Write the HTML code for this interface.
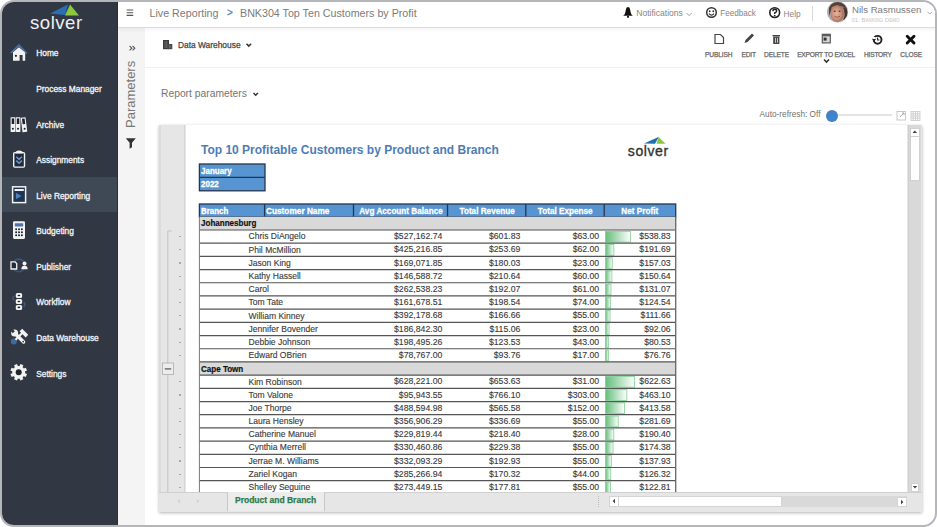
<!DOCTYPE html><html><head><meta charset="utf-8"><style>
*{margin:0;padding:0;box-sizing:border-box}
html,body{width:937px;height:527px;overflow:hidden;background:#fff;font-family:"Liberation Sans", sans-serif}
.t{position:absolute;white-space:nowrap}
.a{position:absolute}
</style></head><body>
<div class="a" style="left:0;top:0;width:937px;height:527px;border:2px solid #b4b6ba;border-radius:14px;overflow:hidden;background:#fff">
<div class="a" style="left:-2px;top:-2px;width:937px;height:527px">
<div class="a" style="left:0;top:0;width:118px;height:527px;background:#323843"></div>
<div class="a" style="left:0;top:177px;width:118px;height:34.8px;background:#3e4955"></div>
<svg class="a" style="left:0;top:0" width="118" height="40">
<polygon points="50,13.5 68,4.5 65,15" fill="#2a6fb5"/>
<polygon points="70,4.5 65,15.5 79,15.5" fill="#8dc63f"/>
</svg>
<div class="t" style="left:30px;top:13.76px;font-size:18.6px;line-height:18.6px;color:#f0f0f0;font-weight:400;letter-spacing:0.5px">solver</div>
<div class="t" style="left:36.2px;top:49.39px;font-size:8.4px;line-height:8.4px;color:#f4f4f4;font-weight:400;-webkit-text-stroke:0.3px #f4f4f4">Home</div>
<div class="t" style="left:36.2px;top:84.97px;font-size:8.4px;line-height:8.4px;color:#f4f4f4;font-weight:400;-webkit-text-stroke:0.3px #f4f4f4">Process Manager</div>
<div class="t" style="left:36.2px;top:120.55px;font-size:8.4px;line-height:8.4px;color:#f4f4f4;font-weight:400;-webkit-text-stroke:0.3px #f4f4f4">Archive</div>
<div class="t" style="left:36.2px;top:156.13px;font-size:8.4px;line-height:8.4px;color:#f4f4f4;font-weight:400;-webkit-text-stroke:0.3px #f4f4f4">Assignments</div>
<div class="t" style="left:36.2px;top:191.71px;font-size:8.4px;line-height:8.4px;color:#f4f4f4;font-weight:400;-webkit-text-stroke:0.3px #f4f4f4">Live Reporting</div>
<div class="t" style="left:36.2px;top:227.29px;font-size:8.4px;line-height:8.4px;color:#f4f4f4;font-weight:400;-webkit-text-stroke:0.3px #f4f4f4">Budgeting</div>
<div class="t" style="left:36.2px;top:262.87px;font-size:8.4px;line-height:8.4px;color:#f4f4f4;font-weight:400;-webkit-text-stroke:0.3px #f4f4f4">Publisher</div>
<div class="t" style="left:36.2px;top:298.45px;font-size:8.4px;line-height:8.4px;color:#f4f4f4;font-weight:400;-webkit-text-stroke:0.3px #f4f4f4">Workflow</div>
<div class="t" style="left:36.2px;top:334.03px;font-size:8.4px;line-height:8.4px;color:#f4f4f4;font-weight:400;-webkit-text-stroke:0.3px #f4f4f4">Data Warehouse</div>
<div class="t" style="left:36.2px;top:369.61px;font-size:8.4px;line-height:8.4px;color:#f4f4f4;font-weight:400;-webkit-text-stroke:0.3px #f4f4f4">Settings</div>
<div class="a" style="left:117px;top:0;width:1px;height:527px;background:#2b3038"></div>
<div class="a" style="left:118px;top:27.5px;width:27px;height:500px;background:#f4f4f4"></div>
<div class="a" style="left:118px;top:0;width:819px;height:27.5px;background:#fff;border-bottom:1.3px solid #dcdcdc;box-shadow:0 2px 4px rgba(0,0,0,0.05)"></div>
<svg class="a" style="left:0;top:0" width="118" height="400">
<path d="M10.8,53 L18.9,45.2 L27,53.5" stroke="#4a73a8" stroke-width="1.6" fill="none"/>
<path d="M13,52.2 L18.9,47.3 L25.2,52.5 L25.2,60.8 L22.6,60.8 L22.6,55 L19.6,55 L19.6,60.8 L13,60.8 Z" fill="#f2f2f2"/>
<circle cx="15.9" cy="55.8" r="1.1" fill="#222"/>
<g fill="#f2f2f2">
<rect x="10.6" y="117.2" width="4.7" height="14.7" rx="0.4"/>
<rect x="15.7" y="117.2" width="4.7" height="14.7" rx="0.4"/>
<rect x="21.6" y="117.4" width="4.8" height="14.7" rx="0.4" transform="rotate(-7 24 124.7)"/>
</g>
<g fill="#1a2230">
<rect x="11.7" y="118.4" width="2.5" height="5.6"/><rect x="16.8" y="118.4" width="2.5" height="5.6"/>
<rect x="22.7" y="118.6" width="2.6" height="5.6" transform="rotate(-7 24 124.7)"/>
<circle cx="12.9" cy="128.7" r="1"/><circle cx="18" cy="128.7" r="1"/><circle cx="24.6" cy="128.8" r="1"/>
</g>
<rect x="13.7" y="152.6" width="10.8" height="14.5" rx="1" fill="#1e2a3a" stroke="#f2f2f2" stroke-width="1.4"/>
<path d="M15.3,153.6 q0,-3.2 3.8,-3.2 q3.8,0 3.8,3.2 z" fill="#f2f2f2"/>
<path d="M16.3,156.8 l2.8,2.6 l2.8,-2.6 M16.3,160.6 l2.8,2.6 l2.8,-2.6" stroke="#7196c6" stroke-width="1.5" fill="none"/>
<rect x="12.6" y="186.8" width="13" height="15.8" fill="#1f344f" stroke="#f2f2f2" stroke-width="1.5"/>
<rect x="14.5" y="189" width="9.3" height="2" fill="#f2f2f2"/>
<polygon points="15.9,192.8 21.6,196 15.9,199.2" fill="#4d7fbf"/>
<rect x="13" y="221.3" width="12" height="17.6" rx="1.3" fill="#f2f2f2"/>
<rect x="14.8" y="223.2" width="8.4" height="3.2" rx="0.6" fill="#4f73aa"/>
<g fill="#1a2230">
<circle cx="16.1" cy="229.3" r="1"/><circle cx="19" cy="229.3" r="1"/><circle cx="21.9" cy="229.3" r="1"/>
<circle cx="16.1" cy="232.3" r="1"/><circle cx="19" cy="232.3" r="1"/><circle cx="21.9" cy="232.3" r="1"/>
<circle cx="16.1" cy="235.3" r="1"/><circle cx="19" cy="235.3" r="1"/><circle cx="21.9" cy="235.3" r="1"/>
</g>
<circle cx="18.8" cy="265.4" r="6.3" fill="none" stroke="#35557c" stroke-width="1.6"/>
<path d="M11,261.8 h4 l1.7,1.7 v5.5 h-5.7 z" fill="#222b36" stroke="#f2f2f2" stroke-width="1.3"/>
<circle cx="24.5" cy="263.6" r="2" fill="#f2f2f2"/>
<path d="M21.3,269.2 q0,-3.4 3.2,-3.4 q3.2,0 3.2,3.4 z" fill="#f2f2f2"/>
<g fill="#f2f2f2">
<rect x="15.8" y="293" width="6.3" height="5.1" rx="1.6"/>
<rect x="15.8" y="299" width="6.3" height="5.1" rx="1.6"/>
<rect x="15.8" y="304.9" width="6.3" height="5.1" rx="1.6"/>
</g>
<g fill="#1a2230">
<ellipse cx="18.9" cy="295.5" rx="1.4" ry="0.8"/><ellipse cx="18.9" cy="301.5" rx="1.4" ry="0.8"/><ellipse cx="18.9" cy="307.4" rx="1.4" ry="0.8"/>
</g>
<path d="M14.3,296 q-3.2,2 0,4.2" stroke="#3f5f85" stroke-width="1.3" fill="none"/>
<path d="M23.5,302.4 q3.2,2 0,4.2" stroke="#3f5f85" stroke-width="1.3" fill="none"/>
<circle cx="13.8" cy="341.4" r="3" fill="#3e6aa0"/>
<path d="M15.5,339.8 L22.5,332.8" stroke="#f2f2f2" stroke-width="2.2"/>
<rect x="19.6" y="331.3" width="8.6" height="3.6" fill="#f2f2f2" transform="rotate(45 23.9 333.1)"/>
<path d="M15.8,334.2 L23.6,342" stroke="#f2f2f2" stroke-width="3.4" stroke-linecap="round"/>
<circle cx="14.6" cy="333" r="3.5" fill="#f2f2f2"/>
<path d="M12.5,328.8 L14.8,331.2 L12.8,333.2 L10.4,330.8 z" fill="#323a44"/>
<circle cx="23.2" cy="341.6" r="0.85" fill="#1a2230"/>
<g transform="translate(18.7 372.3)">
<circle r="6.4" fill="#f2f2f2"/>
<g fill="#f2f2f2">
<rect x="-1.6" y="-8.3" width="3.2" height="16.6" transform="rotate(22.5)"/>
<rect x="-1.6" y="-8.3" width="3.2" height="16.6" transform="rotate(67.5)"/>
<rect x="-1.6" y="-8.3" width="3.2" height="16.6" transform="rotate(112.5)"/>
<rect x="-1.6" y="-8.3" width="3.2" height="16.6" transform="rotate(157.5)"/>
</g>
<circle r="3" fill="#1e2631"/>
</g>
</svg>
<svg class="a" style="left:120px;top:0" width="20" height="27"><path d="M6.6,10 h6.6 M6.6,12.7 h6.6 M6.6,15.4 h6.6" stroke="#555" stroke-width="1.15"/></svg><div class="t" style="left:149.5px;top:7.5px;font-size:10.7px;line-height:10.7px;color:#7b7b7b;font-weight:400;">Live Reporting</div>
<div class="t" style="left:227px;top:8px;font-size:10px;line-height:10px;color:#5b89b6;font-weight:400;-webkit-text-stroke:0.3px #5b89b6">&gt;</div>
<div class="t" style="left:240px;top:7.5px;font-size:10.7px;line-height:10.7px;color:#7b7b7b;font-weight:400;">BNK304 Top Ten Customers by Profit</div>
<svg class="a" style="left:600px;top:0" width="337" height="30">
<path d="M28,7 q-1.6,0 -2,2 q-0.5,3.5 -1.3,5.2 l-1.5,1.6 h9.6 l-1.5,-1.6 q-0.8,-1.7 -1.3,-5.2 q-0.4,-2 -2,-2 z" fill="#111"/>
<circle cx="28" cy="16.8" r="1.1" fill="#111"/>
<path d="M86.5,13 l2.6,2.6 l2.6,-2.6" stroke="#999" stroke-width="1" fill="none"/>
<circle cx="111.5" cy="12.5" r="4.8" fill="none" stroke="#333" stroke-width="1.5"/>
<circle cx="109.7" cy="11.2" r="0.95" fill="#333"/><circle cx="113.3" cy="11.2" r="0.95" fill="#333"/>
<path d="M108.9,13.6 q2.6,3 5.2,0" stroke="#333" stroke-width="1.2" fill="none"/>
<circle cx="174.7" cy="12.6" r="4.9" fill="none" stroke="#222" stroke-width="1.6"/>
<path d="M172.9,11.3 q0,-2 1.8,-2 q1.9,0 1.9,1.7 q0,1.2 -1.9,1.9 v1.1" stroke="#222" stroke-width="1.5" fill="none"/>
<circle cx="174.7" cy="15.6" r="0.9" fill="#222"/>
<rect x="212" y="6" width="1" height="15" fill="#d8d8d8"/>
<path d="M327.5,11.8 l2.3,2.3 l2.3,-2.3" stroke="#aaa" stroke-width="1" fill="none"/>
</svg>
<div class="t" style="left:636.3px;top:9.36px;font-size:8.55px;line-height:8.55px;color:#858585;font-weight:400;">Notifications</div>
<div class="t" style="left:720.2px;top:9.7px;font-size:8.15px;line-height:8.15px;color:#858585;font-weight:400;">Feedback</div>
<div class="t" style="left:783.6px;top:9.57px;font-size:8.3px;line-height:8.3px;color:#858585;font-weight:400;">Help</div>
<svg class="a" style="left:826px;top:0" width="24" height="26">
<defs><clipPath id="av"><circle cx="11.6" cy="12" r="10"/></clipPath>
<radialGradient id="sk" cx="0.45" cy="0.5" r="0.6"><stop offset="0" stop-color="#e2b4a0"/><stop offset="0.6" stop-color="#c98d76"/><stop offset="1" stop-color="#8a5a48"/></radialGradient></defs>
<circle cx="11.6" cy="12" r="10.6" fill="#b4b8be"/>
<g clip-path="url(#av)">
<rect x="0" y="0" width="24" height="26" fill="#a7acb3"/>
<path d="M3,8 q2,-7 9,-7 q7,0 9,7 v8 q-2,-5 -3,-9 q-6,-2 -12,0 q-1,4 -3,9 z" fill="#5a4034"/>
<ellipse cx="11.2" cy="13.5" rx="6.8" ry="8.6" fill="url(#sk)"/>
<path d="M16,6 q3,4 2.5,10 q-1,4 -3,6 l4,2 q3,-6 2,-13 z" fill="#4a3129"/>
<ellipse cx="8.7" cy="11.2" rx="1.1" ry="0.7" fill="#5a3a30"/>
<ellipse cx="13.6" cy="11.2" rx="1.1" ry="0.7" fill="#5a3a30"/>
<path d="M8.5,16.3 q2.8,2 5.5,0" stroke="#9a5a4a" stroke-width="0.9" fill="none"/>
</g>
</svg>
<div class="t" style="left:852px;top:4.5px;font-size:9.6px;line-height:9.6px;color:#7a7a7a;font-weight:400;">Nils Rasmussen</div>
<div class="t" style="left:851.5px;top:16.5px;font-size:6px;line-height:6px;color:#c4c4c4;font-weight:400;">01. B<span style="font-size:4.6px">ANKING</span> D<span style="font-size:4.6px">EMO</span></div>
<svg class="a" style="left:150px;top:30px" width="120" height="40">
<rect x="13" y="10" width="6" height="9.2" fill="#3a3a3a"/>
<rect x="17.5" y="14" width="4.8" height="5.2" fill="#4a4a4a"/>
<rect x="14.6" y="11" width="0.8" height="7" fill="#777"/><rect x="16.4" y="11" width="0.8" height="7" fill="#777"/>
<rect x="19.5" y="15" width="0.8" height="3" fill="#888"/>
<path d="M96.5,13.8 l2.3,2.3 l2.3,-2.3" stroke="#333" stroke-width="1.5" fill="none"/>
</svg>
<div class="t" style="left:178px;top:40.79px;font-size:8.4px;line-height:8.4px;color:#444;font-weight:400;-webkit-text-stroke:0.25px #444">Data Warehouse</div>
<svg class="a" style="left:690px;top:28px" width="247" height="40">
<path d="M25,6.5 h5.5 l3,3 v6 h-8.5 z" fill="none" stroke="#444" stroke-width="1.2"/>
<path d="M54.5,15 l1,-3 l6.5,-6.5 l2,2 l-6.5,6.5 z" fill="#444"/>
<rect x="82.5" y="7" width="7.5" height="1.3" fill="#444"/>
<rect x="83.2" y="8.5" width="6.2" height="7.5" fill="#444"/>
<rect x="85" y="9.8" width="0.7" height="5" fill="#fff"/><rect x="87" y="9.8" width="0.7" height="5" fill="#fff"/>
<rect x="131.7" y="5.7" width="9.2" height="9.8" fill="#5a5a5a"/>
<rect x="132.9" y="8.3" width="6.8" height="6" fill="#d6d6d6"/>
<rect x="133.6" y="9.6" width="3" height="3" fill="#333"/>
<path d="M134,31.5 l2.5,2.5 l2.5,-2.5" stroke="#333" stroke-width="1.6" fill="none"/>
<circle cx="187.6" cy="11.8" r="3.9" fill="none" stroke="#222" stroke-width="1.9"/>
<path d="M181.8,10.6 l2.2,2.8 l2.3,-2.6 z" fill="#222"/>
<rect x="182.5" y="9" width="3" height="2" fill="#fff"/>
<path d="M187.6,9.6 v2.4 h1.8" stroke="#222" stroke-width="1.1" fill="none"/>
<path d="M217.2,8.2 l6.8,6.8 M224,8.2 l-6.8,6.8" stroke="#111" stroke-width="2.9" stroke-linecap="round"/>
</svg>
<div class="t" style="left:705px;top:51.5px;font-size:6.6px;line-height:6.6px;color:#666;font-weight:400;letter-spacing:-0.1px;-webkit-text-stroke:0.25px #666">PUBLISH</div>
<div class="t" style="left:741.4px;top:51.5px;font-size:6.6px;line-height:6.6px;color:#666;font-weight:400;letter-spacing:-0.1px;-webkit-text-stroke:0.25px #666">EDIT</div>
<div class="t" style="left:764px;top:51.5px;font-size:6.6px;line-height:6.6px;color:#666;font-weight:400;letter-spacing:-0.1px;-webkit-text-stroke:0.25px #666">DELETE</div>
<div class="t" style="left:797.2px;top:51.5px;font-size:6.6px;line-height:6.6px;color:#666;font-weight:400;letter-spacing:-0.22px;-webkit-text-stroke:0.25px #666">EXPORT TO EXCEL</div>
<div class="t" style="left:864px;top:51.5px;font-size:6.6px;line-height:6.6px;color:#666;font-weight:400;letter-spacing:-0.2px;-webkit-text-stroke:0.25px #666">HISTORY</div>
<div class="t" style="left:900.3px;top:51.5px;font-size:6.6px;line-height:6.6px;color:#666;font-weight:400;letter-spacing:-0.1px;-webkit-text-stroke:0.25px #666">CLOSE</div>
<div class="a" style="left:145px;top:67px;width:792px;height:1px;background:#f0f0f0"></div>
<svg class="a" style="left:125px;top:42px" width="14" height="12"><path d="M4.6,4 l2.2,2.2 l-2.2,2.2 M7.6,4 l2.2,2.2 l-2.2,2.2" stroke="#555" stroke-width="1.1" fill="none"/></svg><div class="t" style="left:124px;top:128px;font-size:13px;line-height:13px;color:#777;transform-origin:0 0;transform:rotate(-90deg);">Parameters</div>
<svg class="a" style="left:118px;top:130px" width="27" height="25">
<path d="M7.8,8.2 h10 l-3.8,4.5 v4.5 l-2.4,1.5 v-6 z" fill="#333"/>
</svg>
<div class="t" style="left:161px;top:88.8px;font-size:10.3px;line-height:10.3px;color:#757575;font-weight:400;">Report parameters</div>
<svg class="a" style="left:250px;top:89px" width="12" height="10"><path d="M3.5,4 l2.2,2.2 l2.2,-2.2" stroke="#333" stroke-width="1.5" fill="none"/></svg>
<div class="t" style="left:759.6px;top:111.2px;font-size:8.25px;line-height:8.25px;color:#707070;font-weight:400;">Auto-refresh: Off</div>
<div class="a" style="left:838px;top:114.3px;width:54px;height:2px;background:#e4e4e4"></div>
<div class="a" style="left:826px;top:109.8px;width:12.2px;height:12.2px;border-radius:50%;background:#3f83c8"></div>
<svg class="a" style="left:890px;top:105px" width="40" height="20">
<rect x="7" y="6.5" width="8.5" height="8.5" fill="none" stroke="#c8c8c8" stroke-width="1"/>
<path d="M10,12 l4,-4 M12,8 h2 v2" stroke="#aaa" stroke-width="1" fill="none"/>
<g stroke="#c8c8c8" stroke-width="0.8" fill="none">
<rect x="21" y="6.5" width="9" height="9"/>
<path d="M21,8.8 h9 M21,11 h9 M21,13.2 h9 M23.2,6.5 v9 M25.5,6.5 v9 M27.7,6.5 v9"/>
</g>
</svg>
<div class="a" style="left:159px;top:125px;width:763px;height:387px;background:#e6e6e6;box-shadow:0 1px 3px rgba(0,0,0,0.3)"></div>
<div class="a" style="left:185.5px;top:125px;width:721.5px;height:367px;background:#fff"></div>
<div class="a" style="left:183.5px;top:125px;width:1px;height:367px;background:#d6d6d6"></div>
<div class="a" style="left:159px;top:125px;width:2px;height:367px;background:#dcdcdc"></div>
<div class="a" style="left:908px;top:125px;width:13px;height:367px;background:#d9d9d9;border-left:1px solid #cfcfcf"></div>
<div class="a" style="left:910px;top:127.5px;width:9.5px;height:53px;background:#fff;border:1px solid #d0d0d0"></div>
<div class="a" style="left:910px;top:127.5px;width:9.5px;height:9px;background:#fff;border:1px solid #d0d0d0"></div>
<svg class="a" style="left:910px;top:127px" width="10" height="10"><path d="M2.5,6 l2.3,-2.5 l2.3,2.5 z" fill="#444"/></svg>
<div class="a" style="left:911px;top:482.5px;width:8px;height:9px;background:#fff;border:1px solid #d0d0d0"></div>
<svg class="a" style="left:910px;top:482px" width="10" height="10"><path d="M2.8,4 l2.2,2.4 l2.2,-2.4 z" fill="#444"/></svg>
<div class="a" style="left:159px;top:492px;width:763px;height:19px;background:#e6e6e6;border-top:1px solid #d0d0d0"></div>
<div class="a" style="left:226.5px;top:492px;width:98px;height:19px;background:#ececec;border-left:1px solid #c8c8c8;border-right:1px solid #c8c8c8"></div>
<div class="t" style="left:234.7px;top:495.88px;font-size:9px;line-height:9px;color:#2d7a4b;font-weight:700;transform:scaleX(0.945);transform-origin:0 0;-webkit-text-stroke:0.25px #2d7a4b">Product and Branch</div>
<div class="t" style="left:177.5px;top:496.5px;font-size:9px;line-height:9px;color:#c0c0c0;font-weight:400;">&#8249;</div>
<div class="t" style="left:196px;top:496.5px;font-size:9px;line-height:9px;color:#c0c0c0;font-weight:400;">&#8250;</div>
<div class="a" style="left:598px;top:495.5px;width:2px;height:11px;border-left:1px dotted #bbb"></div>
<div class="a" style="left:609px;top:495.5px;width:298px;height:11.5px;background:#d9d9d9"></div>
<div class="a" style="left:609px;top:495.5px;width:173px;height:11.5px;background:#fff;border:1px solid #d4d4d4"></div>
<div class="a" style="left:609px;top:495.5px;width:10px;height:11.5px;background:#fff;border:1px solid #d4d4d4"></div>
<svg class="a" style="left:609px;top:495px" width="10" height="12"><path d="M6,3.8 l-2.4,2.3 l2.4,2.3 z" fill="#444"/></svg>
<div class="a" style="left:897px;top:496.5px;width:9.5px;height:10px;background:#fff;border:1px solid #d4d4d4"></div>
<svg class="a" style="left:897px;top:496px" width="10" height="12"><path d="M4,3.8 l2.4,2.3 l-2.4,2.3 z" fill="#444"/></svg>
<div class="t" style="left:201px;top:143.64px;font-size:12px;line-height:12px;color:#4d7db5;font-weight:700;">Top 10 Profitable Customers by Product and Branch</div>
<svg class="a" style="left:620px;top:130px" width="60" height="32">
<polygon points="24,13.4 39,6.7 35,13.8" fill="#1f6fb0"/>
<polygon points="38.6,7 45.5,13.8 36.5,13.8" fill="#8cc63f"/>
</svg>
<div class="t" style="left:627.8px;top:143.65px;font-size:14px;line-height:14px;color:#333;font-weight:400;letter-spacing:0.6px;-webkit-text-stroke:0.35px #333">solver</div>
<svg class="a" style="left:0;top:0" width="907" height="492"><rect x="199.4" y="164" width="65.6" height="26.8" fill="#5695d1" stroke="#26364e" stroke-width="1.3"/><line x1="199.4" y1="177.3" x2="265" y2="177.3" stroke="#26364e" stroke-width="1.3"/><rect x="199.4" y="204" width="476.30000000000007" height="13" fill="#5695d1" stroke="#26364e" stroke-width="1.3"/><line x1="264.6" y1="204" x2="264.6" y2="217" stroke="#26364e" stroke-width="1.3"/><line x1="353.5" y1="204" x2="353.5" y2="217" stroke="#26364e" stroke-width="1.3"/><line x1="447.5" y1="204" x2="447.5" y2="217" stroke="#26364e" stroke-width="1.3"/><line x1="525.8" y1="204" x2="525.8" y2="217" stroke="#26364e" stroke-width="1.3"/><line x1="604.2" y1="204" x2="604.2" y2="217" stroke="#26364e" stroke-width="1.3"/><defs><linearGradient id="g" x1="0" x2="1" y1="0" y2="0"><stop offset="0" stop-color="#63be7b"/><stop offset="1" stop-color="#ffffff"/></linearGradient></defs><rect x="199.4" y="216.80" width="476.30000000000007" height="13.195" fill="#d9d9d9"/><rect x="605.5" y="231.30" width="24.96" height="10.79" fill="url(#g)" stroke="#7fcf95" stroke-width="0.8"/><rect x="605.5" y="244.49" width="8.36" height="10.79" fill="url(#g)" stroke="#7fcf95" stroke-width="0.8"/><rect x="605.5" y="257.69" width="6.71" height="10.79" fill="url(#g)" stroke="#7fcf95" stroke-width="0.8"/><rect x="605.5" y="270.88" width="6.40" height="10.79" fill="url(#g)" stroke="#7fcf95" stroke-width="0.8"/><rect x="605.5" y="284.07" width="5.47" height="10.79" fill="url(#g)" stroke="#7fcf95" stroke-width="0.8"/><rect x="605.5" y="297.27" width="5.15" height="10.79" fill="url(#g)" stroke="#7fcf95" stroke-width="0.8"/><rect x="605.5" y="310.46" width="4.54" height="10.79" fill="url(#g)" stroke="#7fcf95" stroke-width="0.8"/><rect x="605.5" y="323.66" width="3.60" height="10.79" fill="url(#g)" stroke="#7fcf95" stroke-width="0.8"/><rect x="605.5" y="336.85" width="3.05" height="10.79" fill="url(#g)" stroke="#7fcf95" stroke-width="0.8"/><rect x="605.5" y="350.05" width="2.87" height="10.79" fill="url(#g)" stroke="#7fcf95" stroke-width="0.8"/><rect x="199.4" y="361.94" width="476.30000000000007" height="13.195" fill="#d9d9d9"/><rect x="605.5" y="376.44" width="28.96" height="10.79" fill="url(#g)" stroke="#7fcf95" stroke-width="0.8"/><rect x="605.5" y="389.63" width="21.34" height="10.79" fill="url(#g)" stroke="#7fcf95" stroke-width="0.8"/><rect x="605.5" y="402.83" width="18.97" height="10.79" fill="url(#g)" stroke="#7fcf95" stroke-width="0.8"/><rect x="605.5" y="416.02" width="12.66" height="10.79" fill="url(#g)" stroke="#7fcf95" stroke-width="0.8"/><rect x="605.5" y="429.22" width="8.30" height="10.79" fill="url(#g)" stroke="#7fcf95" stroke-width="0.8"/><rect x="605.5" y="442.41" width="7.54" height="10.79" fill="url(#g)" stroke="#7fcf95" stroke-width="0.8"/><rect x="605.5" y="455.61" width="5.79" height="10.79" fill="url(#g)" stroke="#7fcf95" stroke-width="0.8"/><rect x="605.5" y="468.80" width="5.24" height="10.79" fill="url(#g)" stroke="#7fcf95" stroke-width="0.8"/><rect x="605.5" y="482.00" width="5.07" height="10.79" fill="url(#g)" stroke="#7fcf95" stroke-width="0.8"/><line x1="199.4" y1="230.00" x2="675.7" y2="230.00" stroke="#555" stroke-width="1.2"/><line x1="199.4" y1="243.19" x2="675.7" y2="243.19" stroke="#555" stroke-width="1.2"/><line x1="199.4" y1="256.38" x2="675.7" y2="256.38" stroke="#555" stroke-width="1.2"/><line x1="199.4" y1="269.58" x2="675.7" y2="269.58" stroke="#555" stroke-width="1.2"/><line x1="199.4" y1="282.77" x2="675.7" y2="282.77" stroke="#555" stroke-width="1.2"/><line x1="199.4" y1="295.97" x2="675.7" y2="295.97" stroke="#555" stroke-width="1.2"/><line x1="199.4" y1="309.16" x2="675.7" y2="309.16" stroke="#555" stroke-width="1.2"/><line x1="199.4" y1="322.36" x2="675.7" y2="322.36" stroke="#555" stroke-width="1.2"/><line x1="199.4" y1="335.55" x2="675.7" y2="335.55" stroke="#555" stroke-width="1.2"/><line x1="199.4" y1="348.75" x2="675.7" y2="348.75" stroke="#555" stroke-width="1.2"/><line x1="199.4" y1="361.94" x2="675.7" y2="361.94" stroke="#555" stroke-width="1.2"/><line x1="199.4" y1="375.14" x2="675.7" y2="375.14" stroke="#555" stroke-width="1.2"/><line x1="199.4" y1="388.33" x2="675.7" y2="388.33" stroke="#555" stroke-width="1.2"/><line x1="199.4" y1="401.53" x2="675.7" y2="401.53" stroke="#555" stroke-width="1.2"/><line x1="199.4" y1="414.72" x2="675.7" y2="414.72" stroke="#555" stroke-width="1.2"/><line x1="199.4" y1="427.92" x2="675.7" y2="427.92" stroke="#555" stroke-width="1.2"/><line x1="199.4" y1="441.11" x2="675.7" y2="441.11" stroke="#555" stroke-width="1.2"/><line x1="199.4" y1="454.31" x2="675.7" y2="454.31" stroke="#555" stroke-width="1.2"/><line x1="199.4" y1="467.50" x2="675.7" y2="467.50" stroke="#555" stroke-width="1.2"/><line x1="199.4" y1="480.70" x2="675.7" y2="480.70" stroke="#555" stroke-width="1.2"/><line x1="199.4" y1="493.89" x2="675.7" y2="493.89" stroke="#555" stroke-width="1.2"/><line x1="199.4" y1="217" x2="199.4" y2="492" stroke="#777" stroke-width="1"/><line x1="675.7" y1="217" x2="675.7" y2="492" stroke="#666" stroke-width="1.3"/></svg>
<div class="a" style="left:0;top:0;width:907px;height:492px;overflow:hidden">
<div class="t" style="left:200.8px;top:219.41px;font-size:9.2px;line-height:9.2px;color:#111;font-weight:700;transform:scaleX(0.875);transform-origin:0 0;-webkit-text-stroke:0.2px #111">Johannesburg</div>
<div class="t" style="left:248.5px;top:232.36px;font-size:8.55px;line-height:8.55px;color:#3a3a3a;font-weight:400;-webkit-text-stroke:0.12px #3a3a3a">Chris DiAngelo</div>
<div class="t" style="right:464.70px;top:232.23px;font-size:8.7px;line-height:8.7px;color:#3a3a3a;-webkit-text-stroke:0.12px #3a3a3a">$527,162.74</div>
<div class="t" style="right:386.70px;top:232.23px;font-size:8.7px;line-height:8.7px;color:#3a3a3a;-webkit-text-stroke:0.12px #3a3a3a">$601.83</div>
<div class="t" style="right:307.80px;top:232.23px;font-size:8.7px;line-height:8.7px;color:#3a3a3a;-webkit-text-stroke:0.12px #3a3a3a">$63.00</div>
<div class="t" style="right:236.30px;top:232.23px;font-size:8.7px;line-height:8.7px;color:#3a3a3a;-webkit-text-stroke:0.12px #3a3a3a">$538.83</div>
<div class="t" style="left:248.5px;top:245.55px;font-size:8.55px;line-height:8.55px;color:#3a3a3a;font-weight:400;-webkit-text-stroke:0.12px #3a3a3a">Phil McMillion</div>
<div class="t" style="right:464.70px;top:245.43px;font-size:8.7px;line-height:8.7px;color:#3a3a3a;-webkit-text-stroke:0.12px #3a3a3a">$425,216.85</div>
<div class="t" style="right:386.70px;top:245.43px;font-size:8.7px;line-height:8.7px;color:#3a3a3a;-webkit-text-stroke:0.12px #3a3a3a">$253.69</div>
<div class="t" style="right:307.80px;top:245.43px;font-size:8.7px;line-height:8.7px;color:#3a3a3a;-webkit-text-stroke:0.12px #3a3a3a">$62.00</div>
<div class="t" style="right:236.30px;top:245.43px;font-size:8.7px;line-height:8.7px;color:#3a3a3a;-webkit-text-stroke:0.12px #3a3a3a">$191.69</div>
<div class="t" style="left:248.5px;top:258.75px;font-size:8.55px;line-height:8.55px;color:#3a3a3a;font-weight:400;-webkit-text-stroke:0.12px #3a3a3a">Jason King</div>
<div class="t" style="right:464.70px;top:258.62px;font-size:8.7px;line-height:8.7px;color:#3a3a3a;-webkit-text-stroke:0.12px #3a3a3a">$169,071.85</div>
<div class="t" style="right:386.70px;top:258.62px;font-size:8.7px;line-height:8.7px;color:#3a3a3a;-webkit-text-stroke:0.12px #3a3a3a">$180.03</div>
<div class="t" style="right:307.80px;top:258.62px;font-size:8.7px;line-height:8.7px;color:#3a3a3a;-webkit-text-stroke:0.12px #3a3a3a">$23.00</div>
<div class="t" style="right:236.30px;top:258.62px;font-size:8.7px;line-height:8.7px;color:#3a3a3a;-webkit-text-stroke:0.12px #3a3a3a">$157.03</div>
<div class="t" style="left:248.5px;top:271.94px;font-size:8.55px;line-height:8.55px;color:#3a3a3a;font-weight:400;-webkit-text-stroke:0.12px #3a3a3a">Kathy Hassell</div>
<div class="t" style="right:464.70px;top:271.82px;font-size:8.7px;line-height:8.7px;color:#3a3a3a;-webkit-text-stroke:0.12px #3a3a3a">$146,588.72</div>
<div class="t" style="right:386.70px;top:271.82px;font-size:8.7px;line-height:8.7px;color:#3a3a3a;-webkit-text-stroke:0.12px #3a3a3a">$210.64</div>
<div class="t" style="right:307.80px;top:271.82px;font-size:8.7px;line-height:8.7px;color:#3a3a3a;-webkit-text-stroke:0.12px #3a3a3a">$60.00</div>
<div class="t" style="right:236.30px;top:271.82px;font-size:8.7px;line-height:8.7px;color:#3a3a3a;-webkit-text-stroke:0.12px #3a3a3a">$150.64</div>
<div class="t" style="left:248.5px;top:285.14px;font-size:8.55px;line-height:8.55px;color:#3a3a3a;font-weight:400;-webkit-text-stroke:0.12px #3a3a3a">Carol</div>
<div class="t" style="right:464.70px;top:285.01px;font-size:8.7px;line-height:8.7px;color:#3a3a3a;-webkit-text-stroke:0.12px #3a3a3a">$262,538.23</div>
<div class="t" style="right:386.70px;top:285.01px;font-size:8.7px;line-height:8.7px;color:#3a3a3a;-webkit-text-stroke:0.12px #3a3a3a">$192.07</div>
<div class="t" style="right:307.80px;top:285.01px;font-size:8.7px;line-height:8.7px;color:#3a3a3a;-webkit-text-stroke:0.12px #3a3a3a">$61.00</div>
<div class="t" style="right:236.30px;top:285.01px;font-size:8.7px;line-height:8.7px;color:#3a3a3a;-webkit-text-stroke:0.12px #3a3a3a">$131.07</div>
<div class="t" style="left:248.5px;top:298.33px;font-size:8.55px;line-height:8.55px;color:#3a3a3a;font-weight:400;-webkit-text-stroke:0.12px #3a3a3a">Tom Tate</div>
<div class="t" style="right:464.70px;top:298.21px;font-size:8.7px;line-height:8.7px;color:#3a3a3a;-webkit-text-stroke:0.12px #3a3a3a">$161,678.51</div>
<div class="t" style="right:386.70px;top:298.21px;font-size:8.7px;line-height:8.7px;color:#3a3a3a;-webkit-text-stroke:0.12px #3a3a3a">$198.54</div>
<div class="t" style="right:307.80px;top:298.21px;font-size:8.7px;line-height:8.7px;color:#3a3a3a;-webkit-text-stroke:0.12px #3a3a3a">$74.00</div>
<div class="t" style="right:236.30px;top:298.21px;font-size:8.7px;line-height:8.7px;color:#3a3a3a;-webkit-text-stroke:0.12px #3a3a3a">$124.54</div>
<div class="t" style="left:248.5px;top:311.53px;font-size:8.55px;line-height:8.55px;color:#3a3a3a;font-weight:400;-webkit-text-stroke:0.12px #3a3a3a">William Kinney</div>
<div class="t" style="right:464.70px;top:311.40px;font-size:8.7px;line-height:8.7px;color:#3a3a3a;-webkit-text-stroke:0.12px #3a3a3a">$392,178.68</div>
<div class="t" style="right:386.70px;top:311.40px;font-size:8.7px;line-height:8.7px;color:#3a3a3a;-webkit-text-stroke:0.12px #3a3a3a">$166.66</div>
<div class="t" style="right:307.80px;top:311.40px;font-size:8.7px;line-height:8.7px;color:#3a3a3a;-webkit-text-stroke:0.12px #3a3a3a">$55.00</div>
<div class="t" style="right:236.30px;top:311.40px;font-size:8.7px;line-height:8.7px;color:#3a3a3a;-webkit-text-stroke:0.12px #3a3a3a">$111.66</div>
<div class="t" style="left:248.5px;top:324.72px;font-size:8.55px;line-height:8.55px;color:#3a3a3a;font-weight:400;-webkit-text-stroke:0.12px #3a3a3a">Jennifer Bovender</div>
<div class="t" style="right:464.70px;top:324.60px;font-size:8.7px;line-height:8.7px;color:#3a3a3a;-webkit-text-stroke:0.12px #3a3a3a">$186,842.30</div>
<div class="t" style="right:386.70px;top:324.60px;font-size:8.7px;line-height:8.7px;color:#3a3a3a;-webkit-text-stroke:0.12px #3a3a3a">$115.06</div>
<div class="t" style="right:307.80px;top:324.60px;font-size:8.7px;line-height:8.7px;color:#3a3a3a;-webkit-text-stroke:0.12px #3a3a3a">$23.00</div>
<div class="t" style="right:236.30px;top:324.60px;font-size:8.7px;line-height:8.7px;color:#3a3a3a;-webkit-text-stroke:0.12px #3a3a3a">$92.06</div>
<div class="t" style="left:248.5px;top:337.92px;font-size:8.55px;line-height:8.55px;color:#3a3a3a;font-weight:400;-webkit-text-stroke:0.12px #3a3a3a">Debbie Johnson</div>
<div class="t" style="right:464.70px;top:337.79px;font-size:8.7px;line-height:8.7px;color:#3a3a3a;-webkit-text-stroke:0.12px #3a3a3a">$198,495.26</div>
<div class="t" style="right:386.70px;top:337.79px;font-size:8.7px;line-height:8.7px;color:#3a3a3a;-webkit-text-stroke:0.12px #3a3a3a">$123.53</div>
<div class="t" style="right:307.80px;top:337.79px;font-size:8.7px;line-height:8.7px;color:#3a3a3a;-webkit-text-stroke:0.12px #3a3a3a">$43.00</div>
<div class="t" style="right:236.30px;top:337.79px;font-size:8.7px;line-height:8.7px;color:#3a3a3a;-webkit-text-stroke:0.12px #3a3a3a">$80.53</div>
<div class="t" style="left:248.5px;top:351.11px;font-size:8.55px;line-height:8.55px;color:#3a3a3a;font-weight:400;-webkit-text-stroke:0.12px #3a3a3a">Edward OBrien</div>
<div class="t" style="right:464.70px;top:350.99px;font-size:8.7px;line-height:8.7px;color:#3a3a3a;-webkit-text-stroke:0.12px #3a3a3a">$78,767.00</div>
<div class="t" style="right:386.70px;top:350.99px;font-size:8.7px;line-height:8.7px;color:#3a3a3a;-webkit-text-stroke:0.12px #3a3a3a">$93.76</div>
<div class="t" style="right:307.80px;top:350.99px;font-size:8.7px;line-height:8.7px;color:#3a3a3a;-webkit-text-stroke:0.12px #3a3a3a">$17.00</div>
<div class="t" style="right:236.30px;top:350.99px;font-size:8.7px;line-height:8.7px;color:#3a3a3a;-webkit-text-stroke:0.12px #3a3a3a">$76.76</div>
<div class="t" style="left:200.8px;top:364.56px;font-size:9.2px;line-height:9.2px;color:#111;font-weight:700;transform:scaleX(0.875);transform-origin:0 0;-webkit-text-stroke:0.2px #111">Cape Town</div>
<div class="t" style="left:248.5px;top:377.5px;font-size:8.55px;line-height:8.55px;color:#3a3a3a;font-weight:400;-webkit-text-stroke:0.12px #3a3a3a">Kim Robinson</div>
<div class="t" style="right:464.70px;top:377.38px;font-size:8.7px;line-height:8.7px;color:#3a3a3a;-webkit-text-stroke:0.12px #3a3a3a">$628,221.00</div>
<div class="t" style="right:386.70px;top:377.38px;font-size:8.7px;line-height:8.7px;color:#3a3a3a;-webkit-text-stroke:0.12px #3a3a3a">$653.63</div>
<div class="t" style="right:307.80px;top:377.38px;font-size:8.7px;line-height:8.7px;color:#3a3a3a;-webkit-text-stroke:0.12px #3a3a3a">$31.00</div>
<div class="t" style="right:236.30px;top:377.38px;font-size:8.7px;line-height:8.7px;color:#3a3a3a;-webkit-text-stroke:0.12px #3a3a3a">$622.63</div>
<div class="t" style="left:248.5px;top:390.7px;font-size:8.55px;line-height:8.55px;color:#3a3a3a;font-weight:400;-webkit-text-stroke:0.12px #3a3a3a">Tom Valone</div>
<div class="t" style="right:464.70px;top:390.57px;font-size:8.7px;line-height:8.7px;color:#3a3a3a;-webkit-text-stroke:0.12px #3a3a3a">$95,943.55</div>
<div class="t" style="right:386.70px;top:390.57px;font-size:8.7px;line-height:8.7px;color:#3a3a3a;-webkit-text-stroke:0.12px #3a3a3a">$766.10</div>
<div class="t" style="right:307.80px;top:390.57px;font-size:8.7px;line-height:8.7px;color:#3a3a3a;-webkit-text-stroke:0.12px #3a3a3a">$303.00</div>
<div class="t" style="right:236.30px;top:390.57px;font-size:8.7px;line-height:8.7px;color:#3a3a3a;-webkit-text-stroke:0.12px #3a3a3a">$463.10</div>
<div class="t" style="left:248.5px;top:403.89px;font-size:8.55px;line-height:8.55px;color:#3a3a3a;font-weight:400;-webkit-text-stroke:0.12px #3a3a3a">Joe Thorpe</div>
<div class="t" style="right:464.70px;top:403.77px;font-size:8.7px;line-height:8.7px;color:#3a3a3a;-webkit-text-stroke:0.12px #3a3a3a">$488,594.98</div>
<div class="t" style="right:386.70px;top:403.77px;font-size:8.7px;line-height:8.7px;color:#3a3a3a;-webkit-text-stroke:0.12px #3a3a3a">$565.58</div>
<div class="t" style="right:307.80px;top:403.77px;font-size:8.7px;line-height:8.7px;color:#3a3a3a;-webkit-text-stroke:0.12px #3a3a3a">$152.00</div>
<div class="t" style="right:236.30px;top:403.77px;font-size:8.7px;line-height:8.7px;color:#3a3a3a;-webkit-text-stroke:0.12px #3a3a3a">$413.58</div>
<div class="t" style="left:248.5px;top:417.09px;font-size:8.55px;line-height:8.55px;color:#3a3a3a;font-weight:400;-webkit-text-stroke:0.12px #3a3a3a">Laura Hensley</div>
<div class="t" style="right:464.70px;top:416.96px;font-size:8.7px;line-height:8.7px;color:#3a3a3a;-webkit-text-stroke:0.12px #3a3a3a">$356,906.29</div>
<div class="t" style="right:386.70px;top:416.96px;font-size:8.7px;line-height:8.7px;color:#3a3a3a;-webkit-text-stroke:0.12px #3a3a3a">$336.69</div>
<div class="t" style="right:307.80px;top:416.96px;font-size:8.7px;line-height:8.7px;color:#3a3a3a;-webkit-text-stroke:0.12px #3a3a3a">$55.00</div>
<div class="t" style="right:236.30px;top:416.96px;font-size:8.7px;line-height:8.7px;color:#3a3a3a;-webkit-text-stroke:0.12px #3a3a3a">$281.69</div>
<div class="t" style="left:248.5px;top:430.28px;font-size:8.55px;line-height:8.55px;color:#3a3a3a;font-weight:400;-webkit-text-stroke:0.12px #3a3a3a">Catherine Manuel</div>
<div class="t" style="right:464.70px;top:430.16px;font-size:8.7px;line-height:8.7px;color:#3a3a3a;-webkit-text-stroke:0.12px #3a3a3a">$229,819.44</div>
<div class="t" style="right:386.70px;top:430.16px;font-size:8.7px;line-height:8.7px;color:#3a3a3a;-webkit-text-stroke:0.12px #3a3a3a">$218.40</div>
<div class="t" style="right:307.80px;top:430.16px;font-size:8.7px;line-height:8.7px;color:#3a3a3a;-webkit-text-stroke:0.12px #3a3a3a">$28.00</div>
<div class="t" style="right:236.30px;top:430.16px;font-size:8.7px;line-height:8.7px;color:#3a3a3a;-webkit-text-stroke:0.12px #3a3a3a">$190.40</div>
<div class="t" style="left:248.5px;top:443.48px;font-size:8.55px;line-height:8.55px;color:#3a3a3a;font-weight:400;-webkit-text-stroke:0.12px #3a3a3a">Cynthia Merrell</div>
<div class="t" style="right:464.70px;top:443.35px;font-size:8.7px;line-height:8.7px;color:#3a3a3a;-webkit-text-stroke:0.12px #3a3a3a">$330,460.86</div>
<div class="t" style="right:386.70px;top:443.35px;font-size:8.7px;line-height:8.7px;color:#3a3a3a;-webkit-text-stroke:0.12px #3a3a3a">$229.38</div>
<div class="t" style="right:307.80px;top:443.35px;font-size:8.7px;line-height:8.7px;color:#3a3a3a;-webkit-text-stroke:0.12px #3a3a3a">$55.00</div>
<div class="t" style="right:236.30px;top:443.35px;font-size:8.7px;line-height:8.7px;color:#3a3a3a;-webkit-text-stroke:0.12px #3a3a3a">$174.38</div>
<div class="t" style="left:248.5px;top:456.67px;font-size:8.55px;line-height:8.55px;color:#3a3a3a;font-weight:400;-webkit-text-stroke:0.12px #3a3a3a">Jerrae M. Williams</div>
<div class="t" style="right:464.70px;top:456.55px;font-size:8.7px;line-height:8.7px;color:#3a3a3a;-webkit-text-stroke:0.12px #3a3a3a">$332,093.29</div>
<div class="t" style="right:386.70px;top:456.55px;font-size:8.7px;line-height:8.7px;color:#3a3a3a;-webkit-text-stroke:0.12px #3a3a3a">$192.93</div>
<div class="t" style="right:307.80px;top:456.55px;font-size:8.7px;line-height:8.7px;color:#3a3a3a;-webkit-text-stroke:0.12px #3a3a3a">$55.00</div>
<div class="t" style="right:236.30px;top:456.55px;font-size:8.7px;line-height:8.7px;color:#3a3a3a;-webkit-text-stroke:0.12px #3a3a3a">$137.93</div>
<div class="t" style="left:248.5px;top:469.87px;font-size:8.55px;line-height:8.55px;color:#3a3a3a;font-weight:400;-webkit-text-stroke:0.12px #3a3a3a">Zariel Kogan</div>
<div class="t" style="right:464.70px;top:469.74px;font-size:8.7px;line-height:8.7px;color:#3a3a3a;-webkit-text-stroke:0.12px #3a3a3a">$285,266.94</div>
<div class="t" style="right:386.70px;top:469.74px;font-size:8.7px;line-height:8.7px;color:#3a3a3a;-webkit-text-stroke:0.12px #3a3a3a">$170.32</div>
<div class="t" style="right:307.80px;top:469.74px;font-size:8.7px;line-height:8.7px;color:#3a3a3a;-webkit-text-stroke:0.12px #3a3a3a">$44.00</div>
<div class="t" style="right:236.30px;top:469.74px;font-size:8.7px;line-height:8.7px;color:#3a3a3a;-webkit-text-stroke:0.12px #3a3a3a">$126.32</div>
<div class="t" style="left:248.5px;top:483.06px;font-size:8.55px;line-height:8.55px;color:#3a3a3a;font-weight:400;-webkit-text-stroke:0.12px #3a3a3a">Shelley Seguine</div>
<div class="t" style="right:464.70px;top:482.94px;font-size:8.7px;line-height:8.7px;color:#3a3a3a;-webkit-text-stroke:0.12px #3a3a3a">$273,449.15</div>
<div class="t" style="right:386.70px;top:482.94px;font-size:8.7px;line-height:8.7px;color:#3a3a3a;-webkit-text-stroke:0.12px #3a3a3a">$177.81</div>
<div class="t" style="right:307.80px;top:482.94px;font-size:8.7px;line-height:8.7px;color:#3a3a3a;-webkit-text-stroke:0.12px #3a3a3a">$55.00</div>
<div class="t" style="right:236.30px;top:482.94px;font-size:8.7px;line-height:8.7px;color:#3a3a3a;-webkit-text-stroke:0.12px #3a3a3a">$122.81</div>
</div>
<div class="t" style="left:201px;top:166.61px;font-size:9.2px;line-height:9.2px;color:#fff;font-weight:700;transform:scaleX(0.87);transform-origin:0 0;-webkit-text-stroke:0.3px #fff">January</div>
<div class="t" style="left:201px;top:179.91px;font-size:9.2px;line-height:9.2px;color:#fff;font-weight:700;transform:scaleX(0.87);transform-origin:0 0;-webkit-text-stroke:0.3px #fff">2022</div>
<div class="t" style="left:201px;top:206.61px;font-size:9.2px;line-height:9.2px;color:#fff;font-weight:700;transform:scaleX(0.865);transform-origin:0 0;-webkit-text-stroke:0.3px #fff">Branch</div>
<div class="t" style="left:266.4px;top:206.61px;font-size:9.2px;line-height:9.2px;color:#fff;font-weight:700;transform:scaleX(0.9);transform-origin:0 0;-webkit-text-stroke:0.3px #fff">Customer Name</div>
<div class="t" style="left:353.5px;top:206.61px;width:94.00px;text-align:center;font-size:9.2px;line-height:9.2px;color:#fff;font-weight:700;transform:scaleX(0.89);-webkit-text-stroke:0.3px #fff">Avg Account Balance</div>
<div class="t" style="left:447.5px;top:206.61px;width:78.30px;text-align:center;font-size:9.2px;line-height:9.2px;color:#fff;font-weight:700;transform:scaleX(0.89);-webkit-text-stroke:0.3px #fff">Total Revenue</div>
<div class="t" style="left:525.8px;top:206.61px;width:78.40px;text-align:center;font-size:9.2px;line-height:9.2px;color:#fff;font-weight:700;transform:scaleX(0.89);-webkit-text-stroke:0.3px #fff">Total Expense</div>
<div class="t" style="left:604.2px;top:206.61px;width:71.50px;text-align:center;font-size:9.2px;line-height:9.2px;color:#fff;font-weight:700;transform:scaleX(0.89);-webkit-text-stroke:0.3px #fff">Net Profit</div>
<svg class="a" style="left:155px;top:225px" width="32" height="270">
<path d="M12.8,6 h4 M12.8,6 v132 M12.8,150 v117" stroke="#c2c2c2" stroke-width="1" fill="none"/>
<rect x="7.5" y="138" width="11" height="11.5" fill="#ededed" stroke="#b8b8b8" stroke-width="1"/>
<rect x="9.8" y="143.2" width="6.4" height="1.4" fill="#6a6a6a"/>
</svg>
<div class="a" style="left:179.3px;top:235.99px;width:1.3px;height:1.3px;background:#a8a8a8"></div>
<div class="a" style="left:179.3px;top:249.19px;width:1.3px;height:1.3px;background:#a8a8a8"></div>
<div class="a" style="left:179.3px;top:262.38px;width:1.3px;height:1.3px;background:#a8a8a8"></div>
<div class="a" style="left:179.3px;top:275.58px;width:1.3px;height:1.3px;background:#a8a8a8"></div>
<div class="a" style="left:179.3px;top:288.77px;width:1.3px;height:1.3px;background:#a8a8a8"></div>
<div class="a" style="left:179.3px;top:301.97px;width:1.3px;height:1.3px;background:#a8a8a8"></div>
<div class="a" style="left:179.3px;top:315.16px;width:1.3px;height:1.3px;background:#a8a8a8"></div>
<div class="a" style="left:179.3px;top:328.36px;width:1.3px;height:1.3px;background:#a8a8a8"></div>
<div class="a" style="left:179.3px;top:341.55px;width:1.3px;height:1.3px;background:#a8a8a8"></div>
<div class="a" style="left:179.3px;top:354.75px;width:1.3px;height:1.3px;background:#a8a8a8"></div>
<div class="a" style="left:179.3px;top:381.14px;width:1.3px;height:1.3px;background:#a8a8a8"></div>
<div class="a" style="left:179.3px;top:394.33px;width:1.3px;height:1.3px;background:#a8a8a8"></div>
<div class="a" style="left:179.3px;top:407.53px;width:1.3px;height:1.3px;background:#a8a8a8"></div>
<div class="a" style="left:179.3px;top:420.72px;width:1.3px;height:1.3px;background:#a8a8a8"></div>
<div class="a" style="left:179.3px;top:433.92px;width:1.3px;height:1.3px;background:#a8a8a8"></div>
<div class="a" style="left:179.3px;top:447.11px;width:1.3px;height:1.3px;background:#a8a8a8"></div>
<div class="a" style="left:179.3px;top:460.31px;width:1.3px;height:1.3px;background:#a8a8a8"></div>
<div class="a" style="left:179.3px;top:473.50px;width:1.3px;height:1.3px;background:#a8a8a8"></div>
<div class="a" style="left:179.3px;top:486.70px;width:1.3px;height:1.3px;background:#a8a8a8"></div>
</div></div>
</body></html>
